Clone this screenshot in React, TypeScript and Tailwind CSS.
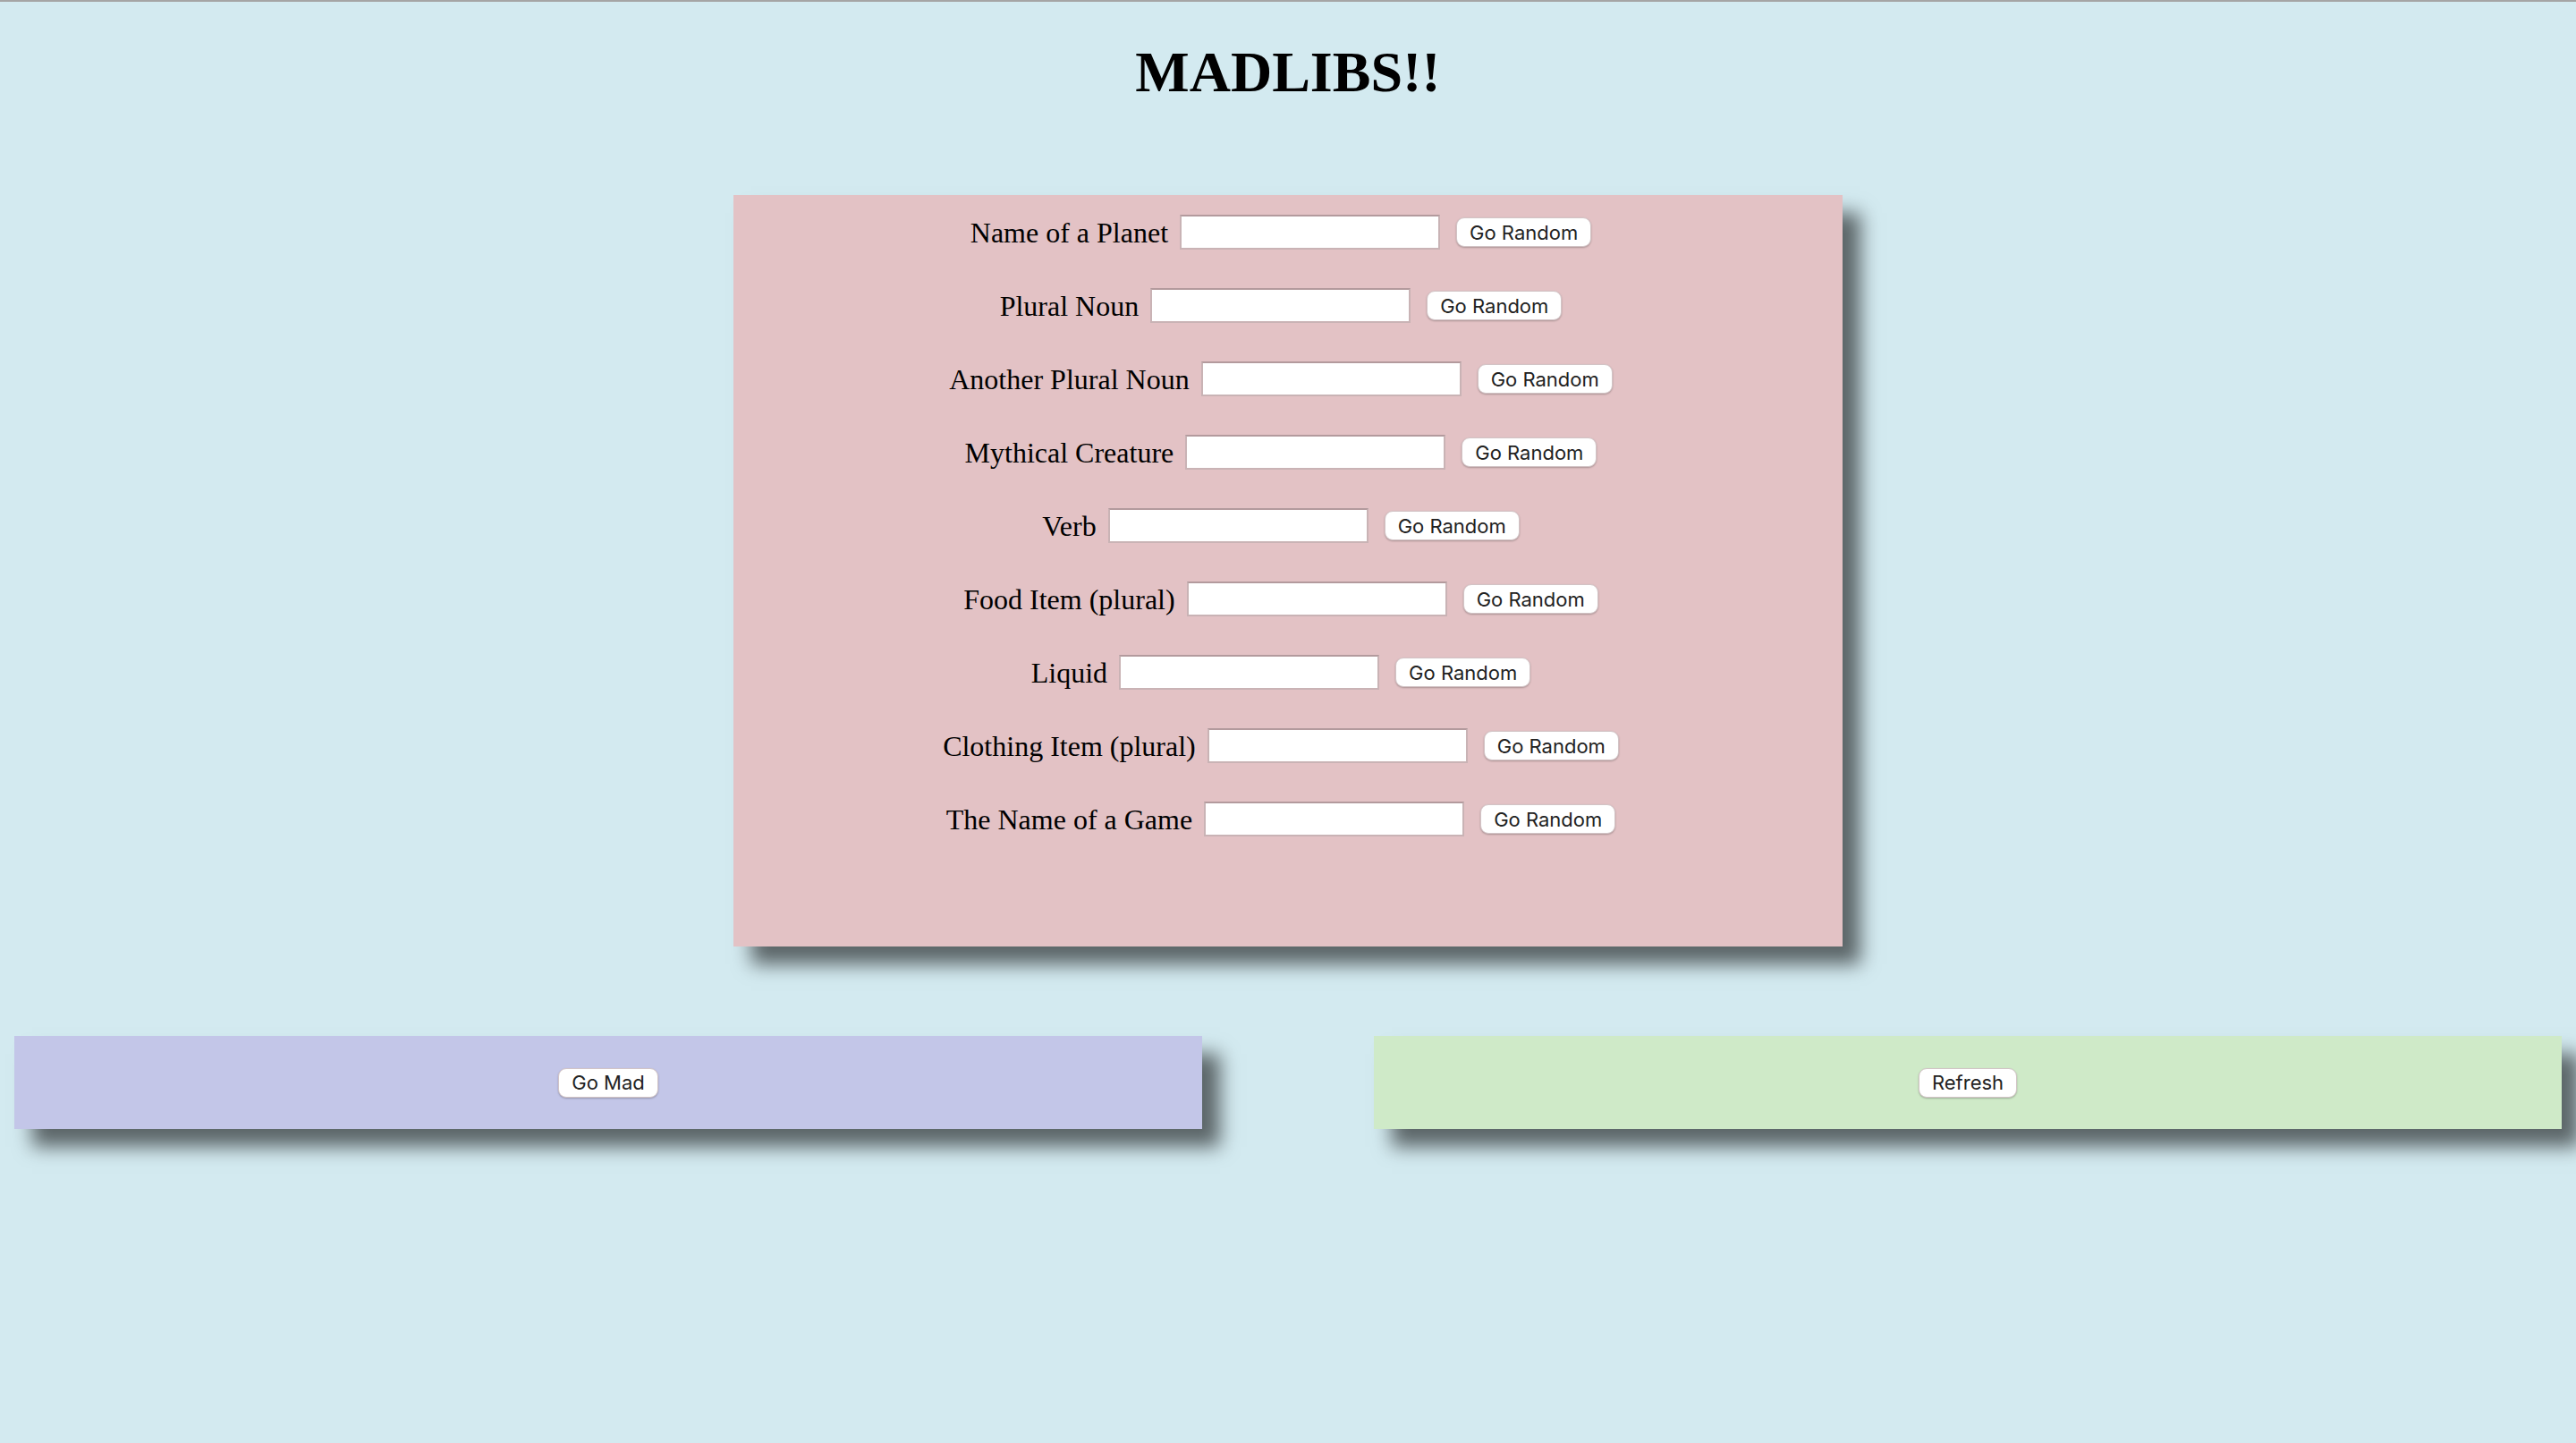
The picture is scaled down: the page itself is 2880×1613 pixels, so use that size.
const fields = [
  'Name of a Planet',
  'Plural Noun',
  'Another Plural Noun',
  'Mythical Creature',
  'Verb',
  'Food Item (plural)',
  'Liquid',
  'Clothing Item (plural)',
  'The Name of a Game',
];

function PlainButton({ children }: { children: React.ReactNode }) {
  return (
    <button className="h-[33px] rounded-[9px] border border-[#d2c4c6] bg-white px-[14px] font-['Inter',sans-serif] text-[22px] leading-none text-[#222] shadow-[0_1px_2px_rgba(0,0,0,0.25)]">
      {children}
    </button>
  );
}

export default function App() {
  return (
    <div className="min-h-[1613px] border-t-2 border-[#a5a5a5] bg-[#d3eaf0] font-['Liberation_Serif',serif] text-black">
      <h1 className="pt-[43px] text-center text-[64px] font-bold leading-[71px]">MADLIBS!!</h1>

      <div className="mx-auto mt-[102px] flex h-[840px] w-[1240px] flex-col items-center gap-[43px] bg-[#e3c2c5] pt-[22px] shadow-[20px_20px_20px_rgba(0,0,0,0.57)]">
        {fields.map((f) => (
          <div key={f} className="flex h-[39px] items-center pr-[16px]">
            <label className="mr-[13px] text-[32px] leading-none">{f}</label>
            <input className="mr-[18px] h-[39px] w-[291px] border-2 border-[#c9b3b5] border-t-[#b39a9d] bg-white" type="text" />
            <PlainButton>Go Random</PlainButton>
          </div>
        ))}
      </div>

      <div className="mt-[100px] flex justify-between px-[16px]">
        <div className="flex h-[104px] w-[1328px] items-center justify-center bg-[#c3c6e8] shadow-[20px_20px_20px_rgba(0,0,0,0.57)]">
          <PlainButton>Go Mad</PlainButton>
        </div>
        <div className="flex h-[104px] w-[1328px] items-center justify-center bg-[#cfeac8] shadow-[20px_20px_20px_rgba(0,0,0,0.57)]">
          <PlainButton>Refresh</PlainButton>
        </div>
      </div>
    </div>
  );
}
